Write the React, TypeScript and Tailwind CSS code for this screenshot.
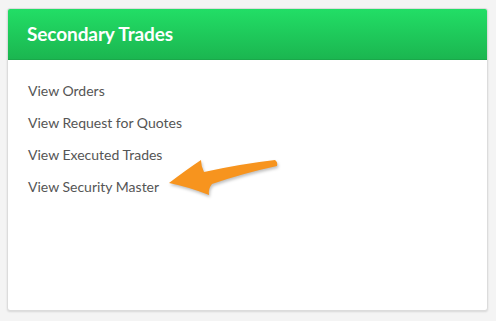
import React from "react";

const links = [
  "View Orders",
  "View Request for Quotes",
  "View Executed Trades",
  "View Security Master",
];

function Arrow() {
  return (
    <svg
      className="absolute left-[162px] top-[150px] drop-shadow-[1px_2px_1.5px_rgba(0,0,0,0.25)]"
      width="120"
      height="52"
      viewBox="162 150 120 52"
    >
      <path
        d="M169 183 Q186 170 201 160 Q201 166 204 172 Q240 164 275 160 Q278 162 277 166 Q244 173 212 184 Q208 189 209 195 Q189 187 169 183 Z"
        fill="#f7941e"
      />
    </svg>
  );
}

export default function App() {
  return (
    <div className="w-[496px] h-[321px] bg-[#f4f4f4] pt-[8px] pl-[7px] font-['Lato',sans-serif]">
      <div className="relative w-[481px] h-[303px] bg-white rounded-[3px] border border-[#dcdcdc] shadow-[0_1px_2px_rgba(0,0,0,0.12)] overflow-hidden">
        <div className="h-[51px] bg-gradient-to-b from-[#22de66] to-[#1bb650] border-b border-[#1aa84a] flex items-center pl-[19px]">
          <span className="text-white font-bold text-[19px] tracking-[-0.1px]">Secondary Trades</span>
        </div>
        <div className="flex flex-col pt-[21px] pl-[20px] gap-[12px]">
          {links.map((l) => (
            <div key={l} className="text-[#555] text-[14px] leading-[20px]">
              {l}
            </div>
          ))}
        </div>
      </div>
      <div className="absolute left-0 top-0">
        <Arrow />
      </div>
    </div>
  );
}
